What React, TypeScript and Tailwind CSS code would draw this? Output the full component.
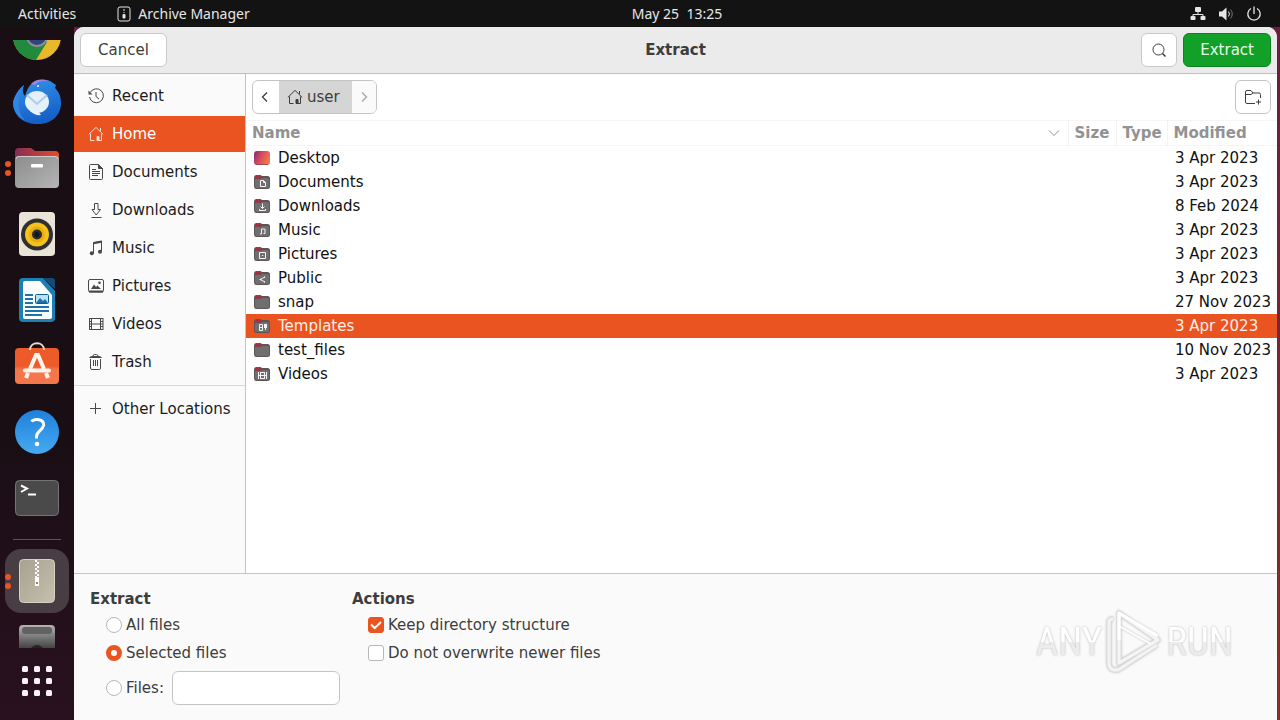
import { useState, type ReactNode } from "react";
import clsx from "clsx";

type Place = { label: string; icon: ReactNode };
type Entry = { name: string; modified: string; emblem?: ReactNode };

function Symbol({ children }: { children: ReactNode }) {
  return (
    <svg
      viewBox="0 0 16 16"
      className="h-4 w-4 shrink-0"
      fill="none"
      stroke="currentColor"
      aria-hidden="true"
    >
      {children}
    </svg>
  );
}

const homeIcon = (
  <Symbol>
    <path d="M.8 8.4 8 1.4l7.2 7" />
    <path d="M2.5 7.5v7h4M13.5 7.5v7h-3M12.5 2v3" />
    <path d="M9 14.5v-4h2v4z" fill="currentColor" />
  </Symbol>
);

const places: Place[] = [
  {
    label: "Recent",
    icon: (
      <Symbol>
        <path d="M2.2 4.5A7 7 0 1 1 1.5 9" />
        <path d="M8 4v4.5l3 2.5" />
        <path d="M.5 2.5v4h4z" fill="currentColor" stroke="none" />
      </Symbol>
    ),
  },
  { label: "Home", icon: homeIcon },
  {
    label: "Documents",
    icon: (
      <Symbol>
        <path d="M2.5.5h8l4 4v10q0 1-1 1h-11q-1 0-1-1v-13q0-1 1-1z" />
        <path d="M10.5.5v4h4z" fill="currentColor" />
        <path d="M4 5.5h4M4 7.5h8M4 9.5h8M4 11.5h6" />
      </Symbol>
    ),
  },
  {
    label: "Downloads",
    icon: (
      <Symbol>
        <path d="M6.5 1.5H10v6h2.5L8.2 13 4 7.5h2.5zM3.5 15.5h10" />
      </Symbol>
    ),
  },
  {
    label: "Music",
    icon: (
      <Symbol>
        <path d="M5.5 13V2.5l8-1.500v10" />
        <path d="M5.500 3.200 13.500 1.700" strokeWidth="2" />
        <circle cx="3.800" cy="13.200" r="2" fill="currentColor" stroke="none" />
        <circle cx="12" cy="11.800" r="2" fill="currentColor" stroke="none" />
      </Symbol>
    ),
  },
  {
    label: "Pictures",
    icon: (
      <Symbol>
        <rect x=".5" y="1.500" width="15" height="12.500" rx="1.500" />
        <path d="M1 13.500h14" strokeWidth="2" />
        <path d="m3 11 3-4.500 2 2.500 1.500-1.500L13 11z" fill="currentColor" stroke="none" />
        <circle cx="11.500" cy="4.800" r="1.300" fill="currentColor" stroke="none" />
      </Symbol>
    ),
  },
  {
    label: "Videos",
    icon: (
      <Symbol>
        <path d="M3.500 2v12M12.500 2v12M3.500 2.500h9M3.500 8h9M3.500 13.500h9" />
        <path d="M1.500 2v12M15 2v12M1.500 2.500h2M1.500 5.500h2M1.500 8h2M1.500 10.500h2M1.500 13.500h2M12.500 2.500h2.500M12.500 5.500h2.500M12.500 8h2.500M12.500 10.500h2.500M12.500 13.500h2.500" />
      </Symbol>
    ),
  },
  {
    label: "Trash",
    icon: (
      <Symbol>
        <path d="M5 2.500q0-2 1.500-2h2q1.500 0 1.500 2" />
        <path d="M1 4q1-2 3-2h7q2 0 3 2z" fill="currentColor" stroke="none" />
        <path d="M2.500 5v9q0 1.500 1.500 1.500h7.500q1 0 1-1.500V5M5.500 6v6M7.500 6v6M9.500 6v6" />
      </Symbol>
    ),
  },
];

const entries: Entry[] = [
  { name: "Desktop", modified: "3 Apr 2023" },
  {
    name: "Documents",
    modified: "3 Apr 2023",
    emblem: <path d="M6.500 6.500h3l2 2v4h-5zM9.500 6.500v2h2" />,
  },
  {
    name: "Downloads",
    modified: "8 Feb 2024",
    emblem: <path d="M8.500 5.500v5M6.500 8.500l2 2 2-2M5.500 11v1.500h6V11" />,
  },
  {
    name: "Music",
    modified: "3 Apr 2023",
    emblem: <path d="M7.500 12V7h3.500v4.500M6 12h1.500M9.500 11.500H11" />,
  },
  {
    name: "Pictures",
    modified: "3 Apr 2023",
    emblem: <path d="M5.500 6.500h6v6h-6zM8 9.500h1.200" />,
  },
  {
    name: "Public",
    modified: "3 Apr 2023",
    emblem: <path d="M11 7 6 9.500l5 2.500M5.500 9.500h2M10.500 6.500v1.500M10.500 11v1.500" />,
  },
  { name: "snap", modified: "27 Nov 2023" },
  {
    name: "Templates",
    modified: "3 Apr 2023",
    emblem: <path d="M5.500 6.500h3v6h-3zM6 9.500h2M10.500 6v4M12.500 6v4M11.500 6v6" />,
  },
  { name: "test_files", modified: "10 Nov 2023" },
  {
    name: "Videos",
    modified: "3 Apr 2023",
    emblem: <path d="M4.500 6v7M12.500 6v7M6.500 6v7M10.500 6v7M6.500 6.500h4M4.500 9.500h8M6.500 12.500h4" />,
  },
];

function FolderIcon({ entry }: { entry: Entry }) {
  if (entry.name === "Desktop") {
    return (
      <svg viewBox="0 0 16 16" className="h-4 w-4 shrink-0" aria-hidden="true">
        <defs>
          <linearGradient id="desktop" x1="0" y1="0" x2="1" y2=".4">
            <stop offset="0" stopColor="#7d2c78" />
            <stop offset=".5" stopColor="#d84a5c" />
            <stop offset="1" stopColor="#f0764c" />
          </linearGradient>
        </defs>
        <rect y="1" width="16" height="14" rx="3" fill="url(#desktop)" />
        <path d="M2 14.500h12" stroke="#9c4a55" />
      </svg>
    );
  }

  return (
    <svg viewBox="0 0 16 16" className="h-4 w-4 shrink-0" fill="none" aria-hidden="true">
      <path
        d="M0 3.500Q0 1 2.500 1h4L8 2h5.500Q16 2 16 4.500v8q0 2.500-2.500 2.500h-11Q0 15 0 12.500z"
        fill="#5f5558"
      />
      <path d="M1.500 4.500Q1.500 2 3 2h3.200L8 3h5.500q1.500 0 1.500 1.500z" fill="#b5283f" />
      <path
        d="M1 6Q1 5 2 5h4.500L8 4h5.500Q15 4 15 5.500v7q0 1.500-1.500 1.500h-11Q1 14 1 12.500z"
        fill="#6f6f6f"
      />
      <g stroke="#f4f4f4">{entry.emblem}</g>
    </svg>
  );
}

function DockIcon({ children }: { children: ReactNode }) {
  return (
    <svg viewBox="0 0 48 48" className="h-12 w-12" fill="none" aria-hidden="true">
      {children}
    </svg>
  );
}

function RunningDots() {
  return (
    <span className="absolute left-0 flex flex-col gap-[3px]">
      <span className="h-1.5 w-1.5 rounded-full bg-[#e95420]" />
      <span className="h-1.5 w-1.5 rounded-full bg-[#e95420]" />
    </span>
  );
}

type DockItemProps = {
  label: string;
  running?: boolean;
  active?: boolean;
  children: ReactNode;
};

function DockItem({ label, running, active, children }: DockItemProps) {
  return (
    <button
      aria-label={label}
      className={clsx(
        "relative flex h-16 w-16 shrink-0 items-center justify-center rounded-2xl",
        active && "bg-[#483d43]",
      )}
    >
      {running && <RunningDots />}
      <DockIcon>{children}</DockIcon>
    </button>
  );
}

function Dock() {
  return (
    <nav
      aria-label="Dock"
      className="flex w-[74px] shrink-0 flex-col items-center bg-linear-to-b from-[#1a0e15] from-60% to-[#29111f] pt-[13px]"
    >
      <div className="flex min-h-0 flex-1 flex-col items-center gap-0.5 overflow-hidden">
        <div className="-mt-9">
          <DockItem label="Google Chrome">
            <circle cx="24" cy="24" r="24" fill="#e9b92c" />
            <path d="M24 24 3.200 12A24 24 0 0 0 23 48l11-18z" fill="#218a3c" />
            <path d="M24 24h20.800L34 12H3.200z" fill="#d93a2b" />
            <circle cx="24" cy="24" r="11" fill="#8c8c9c" />
            <circle cx="24" cy="24" r="9" fill="#34437c" />
          </DockItem>
        </div>
        <DockItem label="Thunderbird">
          <defs>
            <linearGradient id="bird" x1="0" y1="0" x2=".3" y2="1">
              <stop offset="0" stopColor="#3494ec" />
              <stop offset="1" stopColor="#1560c8" />
            </linearGradient>
          </defs>
          <path
            d="M0 24Q3 13 11 7q-3 7 1 11C15 8 19 3 27 2q8-1 13 3l3 2-1 3c5 5 6 10 6 15 0 13-10 21-23 21C10 46 0 38 0 24z"
            fill="url(#bird)"
          />
          <path d="M18 6q7-7 18-3-10-1-14 4z" fill="#a880e0" />
          <path d="M0 24q0 12 12 19-8-9-6-22 1-6 5-14Q3 13 0 24z" fill="#3184e2" />
          <ellipse cx="24" cy="24" rx="12" ry="11" fill="#e4f0fa" />
          <path d="m14 17 10 9 10-9" stroke="#b3cbe0" strokeWidth="2" />
          <path d="M17 33q5 5 11 4l-3-4z" fill="#e4f0fa" />
          <circle cx="25" cy="8" r="1" fill="#fff" />
        </DockItem>
        <DockItem label="Files" running>
          <defs>
            <linearGradient id="files-back">
              <stop offset="0" stopColor="#842e55" />
              <stop offset="1" stopColor="#e64c28" />
            </linearGradient>
            <linearGradient id="files-front" x1="0" y1="0" x2="1" y2="1">
              <stop offset="0" stopColor="#8c8c8c" />
              <stop offset="1" stopColor="#b5b5b5" />
            </linearGradient>
          </defs>
          <path d="M2 8q0-4 4-4h12l4 3h20q4 0 4 4v14H2z" fill="url(#files-back)" />
          <rect x="2" y="12" width="44" height="32" rx="4" fill="url(#files-front)" />
          <path d="M3 15q0-2.500 3-2.500h36q3 0 3 2.500" stroke="#cfcfcf" />
          <rect x="18" y="20" width="12" height="3.500" rx="1" fill="#fff" />
        </DockItem>
        <DockItem label="Rhythmbox">
          <rect x="6" y="2" width="36" height="44" rx="4" fill="#e9e3d8" />
          <circle cx="24" cy="24.500" r="16" fill="#303030" />
          <circle cx="24" cy="24.500" r="12" fill="#f6c21c" />
          <circle cx="24" cy="24.500" r="8" fill="#e8ae10" />
          <circle cx="24" cy="24.500" r="5" fill="#2b2b2b" />
          <circle cx="24" cy="24.500" r="2.500" fill="#11171e" />
        </DockItem>
        <DockItem label="LibreOffice Writer">
          <path d="M10 2h20l12 13v27q0 4-4 4H10q-4 0-4-4V6q0-4 4-4z" fill="#1c80b4" />
          <path d="M12 5h15l12 14v22q0 2-2 2H12q-2 0-2-2V7q0-2 2-2z" fill="#fafcfd" />
          <path d="M30 2h9q3 0 3 3v8z" fill="#164b78" />
          <path
            d="M12 19h8M12 23h8M12 27h8M12 31h24M12 35h24M12 39h17"
            stroke="#1a74aa"
            strokeWidth="2"
          />
          <rect x="22.500" y="18.500" width="13" height="9" rx="1" fill="#b8e4fa" stroke="#155b90" />
          <path d="m23 27 4-5 3 3 2-2 3 4z" fill="#1a74aa" />
        </DockItem>
        <DockItem label="Ubuntu Software">
          <defs>
            <linearGradient id="bag" x1="0" y1="0" x2="0" y2="1">
              <stop offset=".5" stopColor="#ee5b2a" />
              <stop offset=".6" stopColor="#f4764b" />
            </linearGradient>
          </defs>
          <rect x="2" y="6" width="44" height="36" rx="4" fill="url(#bag)" />
          <path d="M17 8c0-9 14-9 14 0" stroke="#f2d8c6" strokeWidth="2" />
          <g stroke="#fff5ee" strokeWidth="4">
            <path d="m17 27 6-14h2l6 14M15 31l-2 5M33 31l2 5" />
            <path d="M12 28.500h24" strokeLinecap="round" />
          </g>
        </DockItem>
        <DockItem label="Help">
          <defs>
            <linearGradient id="help" x1="0" y1="0" x2="0" y2="1">
              <stop offset="0" stopColor="#1f80dc" />
              <stop offset="1" stopColor="#46aaf0" />
            </linearGradient>
          </defs>
          <circle cx="24" cy="24" r="22" fill="url(#help)" />
          <path
            d="M18.500 13.500c3-3.500 13-2.500 12 4-1 5-7 5.500-7 11v2"
            stroke="#fff"
            strokeWidth="3"
          />
          <circle cx="24" cy="36" r="2.300" fill="#fff" />
        </DockItem>
        <DockItem label="Terminal">
          <rect x="2.500" y="6.500" width="43" height="35" rx="4" fill="#4a4a4a" stroke="#747474" />
          <path d="m8 11.500 6 3L8 18M15 20.500h8" stroke="#fff" strokeWidth="2" />
        </DockItem>
        <hr className="my-[7px] w-12 shrink-0 border-[#5d5359]" />
        <DockItem label="Archive Manager" running active>
          <defs>
            <linearGradient id="archive" x1="0" y1="0" x2="1" y2="1">
              <stop offset="0" stopColor="#a7a191" />
              <stop offset="1" stopColor="#c6bfae" />
            </linearGradient>
          </defs>
          <rect x="6.500" y="2.500" width="35" height="43" rx="4" fill="url(#archive)" stroke="#d5d0c2" />
          <path d="M23 3v18M25 5v18" stroke="#fff" strokeWidth="2" strokeDasharray="2 2" />
          <path d="M22 20h4v9h-4z" fill="#fff" />
          <path d="M23 25h2v2h-2z" fill="#8d8779" />
        </DockItem>
        <DockItem label="Removable drive">
          <defs>
            <linearGradient id="drive" x1="0" y1="0" x2="0" y2="1">
              <stop offset="0" stopColor="#b4b4b4" />
              <stop offset=".6" stopColor="#333" />
            </linearGradient>
          </defs>
          <rect x="6" y="2" width="36" height="44" rx="4" fill="url(#drive)" />
          <rect x="9" y="4" width="30" height="7" rx="3" fill="#626262" />
          <circle cx="24" cy="29" r="7" fill="#252525" />
        </DockItem>
      </div>
      <button
        aria-label="Show Applications"
        className="flex h-[72px] w-16 shrink-0 justify-center pt-[9px]"
      >
        <DockIcon>
          <g fill="#fbf3f8">
            {[9, 21, 33].map((y) =>
              [9, 21, 33].map((x) => (
                <rect key={`${x}-${y}`} x={x} y={y} width="6" height="6" rx="1.500" />
              )),
            )}
          </g>
        </DockIcon>
      </button>
    </nav>
  );
}

function TopBar() {
  return (
    <header className="grid h-[27px] shrink-0 grid-cols-[74px_1fr_auto_1fr] items-center bg-[#131313] font-['Noto_Sans','Open_Sans',sans-serif] text-sm text-[#e6e6e6]">
      <div className="col-span-2 flex items-center pl-[18px]">
        <button>Activities</button>
        <button className="ml-10 flex items-center gap-1.5">
          <Symbol>
            <rect x="2" y="1" width="12" height="14" rx="2" />
            <path d="M8 3v2M8 6v1" />
            <rect x="6.500" y="8" width="3" height="4.500" rx="1" fill="currentColor" stroke="none" />
          </Symbol>
          Archive Manager
        </button>
      </div>
      <button className="whitespace-pre">May 25  13:25</button>
      <div className="flex items-center justify-end gap-3 pr-[18px]">
        <Symbol>
          <g fill="currentColor" stroke="none">
            <rect x="5" y="1" width="6" height="5" rx="1" />
            <rect x=".5" y="10" width="5" height="4" rx="1" />
            <rect x="10.500" y="10" width="5" height="4" rx="1" />
          </g>
          <path d="M8 6v2.500M3 10V8.500h10V10" />
        </Symbol>
        <Symbol>
          <path d="M1 5.500h3L8.500 1.500v13L4 10.500H1z" fill="currentColor" stroke="none" />
          <path d="M10.500 5.500q2 2.500 0 5" />
          <path d="M12.500 3.500q3.500 4.500 0 9" stroke="#777" />
        </Symbol>
        <Symbol>
          <path d="M5 2.500a6.200 6.200 0 1 0 6 0M8 .5V8" strokeWidth="1.300" />
        </Symbol>
      </div>
    </header>
  );
}

function Sidebar() {
  const [selected, setSelected] = useState("Home");

  return (
    <aside className="w-[172px] shrink-0 border-r border-[#c4c4c4] bg-[#fafafa] pt-1">
      <ul className="flex flex-col gap-0.5">
        {places.map((place) => (
          <li key={place.label}>
            <button
              onClick={() => setSelected(place.label)}
              className={clsx(
                "flex h-9 w-full items-center gap-2 px-3.5",
                place.label === selected ? "bg-[#e95420] text-white" : "text-[#1c1c1c]",
              )}
            >
              <span className="opacity-80">{place.icon}</span>
              {place.label}
            </button>
          </li>
        ))}
      </ul>
      <hr className="my-[5px] border-[#d9d9d9]" />
      <button className="flex h-9 w-full items-center gap-2 px-3.5 whitespace-nowrap text-[#1c1c1c]">
        <span className="opacity-80">
          <Symbol>
            <path d="M7.500 2v11M2 7.500h11" />
          </Symbol>
        </span>
        Other Locations
      </button>
    </aside>
  );
}

function PathBar() {
  return (
    <div className="flex h-[46px] items-center justify-between px-1.5">
      <div className="flex h-[34px] overflow-hidden rounded-md border border-[#c4c4c4]">
        <button aria-label="Back" className="w-[26px] px-1 text-[#3d3d3d]">
          <Symbol>
            <path d="m10 3.500-4.500 4.500L10 12.500" strokeWidth="1.300" />
          </Symbol>
        </button>
        <button className="flex items-center gap-1 bg-[#d5d5d5] px-2 pr-3 text-[#3d3d3d]">
          {homeIcon}
          user
        </button>
        <button aria-label="Forward" className="w-6 bg-[#fafafa] px-1 text-[#a5a5a5]">
          <Symbol>
            <path d="m6 3.500 4.500 4.500L6 12.500" strokeWidth="1.300" />
          </Symbol>
        </button>
      </div>
      <button
        aria-label="Create Folder"
        className="flex h-[34px] w-9 items-center justify-center rounded-md border border-[#c4c4c4] text-[#3d3d3d]"
      >
        <Symbol>
          <path d="M10 14.500H2q-1.500 0-1.500-1.500V3Q.5 1.500 2 1.500h4L8 4h6q1.500 0 1.500 1.500V9" />
          <path d="M.5 5.500H6L8 4M13.500 10.500v5M11 13h5" />
        </Symbol>
      </button>
    </div>
  );
}

function FileTable() {
  const [selected, setSelected] = useState("Templates");

  return (
    <table className="w-full table-fixed text-left">
      <colgroup>
        <col />
        <col className="w-12" />
        <col className="w-[51px]" />
        <col className="w-[110px]" />
      </colgroup>
      <thead className="border-y border-[#f5f5f5] text-[#929292]">
        <tr className="h-[25px]">
          <th className="border-r border-[#f3f3f3] px-1.5">
            <div className="flex items-center justify-between">
              Name
              <Symbol>
                <path d="m3 5.500 5 5 5-5" />
              </Symbol>
            </div>
          </th>
          <th className="border-r border-[#f3f3f3] px-1.5">Size</th>
          <th className="border-r border-[#f3f3f3] px-1.5">Type</th>
          <th className="px-1.5">Modified</th>
        </tr>
      </thead>
      <tbody>
        {entries.map((entry) => (
          <tr
            key={entry.name}
            onClick={() => setSelected(entry.name)}
            className={clsx(
              "h-6",
              entry.name === selected ? "bg-[#e95420] text-[#fdeee8]" : "text-[#111]",
            )}
          >
            <td className="pl-2">
              <div className="flex items-center gap-2">
                <FolderIcon entry={entry} />
                {entry.name}
              </div>
            </td>
            <td />
            <td />
            <td className="pl-2 whitespace-nowrap">{entry.modified}</td>
          </tr>
        ))}
      </tbody>
    </table>
  );
}

const radioStyle =
  "h-4 w-4 appearance-none rounded-full border border-[#b8b8b8] bg-white checked:border-[5px] checked:border-[#e95420]";

function Options() {
  const [scope, setScope] = useState("selected");
  const [keep, setKeep] = useState(true);
  const [newer, setNewer] = useState(false);

  return (
    <footer className="relative flex shrink-0 gap-3 border-t border-[#c4c4c4] bg-[#fafafa] px-4 py-[15px] text-[#3d3d3d]">
      <fieldset>
        <legend className="font-bold">Extract</legend>
        <div className="flex flex-col gap-2 pt-1.5 pl-4">
          <label className="flex h-5 items-center gap-1">
            <input
              type="radio"
              name="scope"
              className={radioStyle}
              checked={scope === "all"}
              onChange={() => setScope("all")}
            />
            All files
          </label>
          <label className="flex h-5 items-center gap-1">
            <input
              type="radio"
              name="scope"
              className={radioStyle}
              checked={scope === "selected"}
              onChange={() => setScope("selected")}
            />
            Selected files
          </label>
          <div className="flex h-[34px] items-center gap-2">
            <label className="flex items-center gap-1">
              <input
                type="radio"
                name="scope"
                className={radioStyle}
                checked={scope === "pattern"}
                onChange={() => setScope("pattern")}
              />
              Files:
            </label>
            <input
              type="text"
              aria-label="Files"
              className="h-full w-[168px] rounded-md border border-[#c4c4c4] bg-white px-2"
            />
          </div>
        </div>
      </fieldset>
      <fieldset>
        <legend className="font-bold">Actions</legend>
        <div className="flex flex-col gap-2 pt-1.5 pl-4">
          <Check label="Keep directory structure" checked={keep} onChange={setKeep} />
          <Check label="Do not overwrite newer files" checked={newer} onChange={setNewer} />
        </div>
      </fieldset>
      <Watermark />
    </footer>
  );
}

type CheckProps = {
  label: string;
  checked: boolean;
  onChange: (checked: boolean) => void;
};

function Check({ label, checked, onChange }: CheckProps) {
  return (
    <label className="flex h-5 items-center gap-1">
      <span className="grid h-4 w-4 place-items-center">
        <input
          type="checkbox"
          checked={checked}
          onChange={(event) => onChange(event.target.checked)}
          className="col-start-1 row-start-1 h-4 w-4 appearance-none rounded-[3px] border border-[#b8b8b8] bg-white checked:border-[#e95420] checked:bg-[#e95420]"
        />
        {checked && (
          <svg
            viewBox="0 0 16 16"
            className="pointer-events-none col-start-1 row-start-1 h-4 w-4"
            fill="none"
            aria-hidden="true"
          >
            <path d="m3 7.500 3.700 3.500L13 5" stroke="#fff" strokeWidth="2" />
          </svg>
        )}
      </span>
      {label}
    </label>
  );
}

const watermarkText =
  "bg-linear-to-b from-white from-50% to-[#ececec] to-50% bg-clip-text text-transparent drop-shadow-[0_0_1px_#b8b8b8]";

function Watermark() {
  return (
    <div className="pointer-events-none absolute top-9 right-11 flex items-center gap-1 font-['Roboto_Condensed','Roboto',sans-serif] text-[39px] leading-none">
      <span className={watermarkText}>ANY</span>
      <svg
        viewBox="0 0 56 64"
        className="h-16 w-14 drop-shadow-[0_0_1px_#bbb]"
        fill="none"
        strokeLinejoin="round"
        aria-hidden="true"
      >
        <path d="M7 9q-4 0-4 3v41q0 8 9 7l39-25" stroke="#ddd" strokeWidth="5" />
        <path d="M7 9q-4 0-4 3v41q0 8 9 7l39-25" stroke="#f3f3f3" strokeWidth="3" />
        <path d="M13 3v50l39-23z" stroke="#ddd" strokeWidth="5" />
        <path d="M13 3v50l39-23z" stroke="#f5f5f5" strokeWidth="3" />
        <path d="M13 30V3l39 23" stroke="#fff" strokeWidth="3" />
        <path d="m13 16 32 18" stroke="#fff" strokeWidth="2" />
      </svg>
      <span className={watermarkText}>RUN</span>
    </div>
  );
}

export default function App() {
  return (
    <div className="flex h-screen flex-col overflow-hidden font-['DejaVu_Sans',sans-serif] text-[15px] leading-5">
      <TopBar />
      <div className="flex min-h-0 flex-1 bg-[#1a0e15]">
        <Dock />
        <div className="min-w-0 flex-1 bg-linear-to-b from-[#6b1c40] to-[#86301c] pr-[3px]">
          <main className="flex h-full flex-col overflow-hidden rounded-t-[10px] bg-white">
            <div className="grid h-[47px] shrink-0 grid-cols-[1fr_auto_1fr] items-center border-b border-[#bfbfbf] bg-[#ebebeb] px-1.5 text-[#3d3d3d]">
              <div className="flex">
                <button className="h-[34px] rounded-md border border-[#c9c9c9] bg-white px-[17px]">
                  Cancel
                </button>
              </div>
              <h1 className="font-bold">Extract</h1>
              <div className="flex justify-end gap-1.5">
                <button
                  aria-label="Search"
                  className="flex h-[34px] w-9 items-center justify-center rounded-md border border-[#c9c9c9] bg-white"
                >
                  <Symbol>
                    <circle cx="7.500" cy="7.500" r="5.500" />
                    <path d="m11.500 11.500 3 3" strokeWidth="1.500" />
                  </Symbol>
                </button>
                <button className="h-[34px] rounded-md border border-[#0d8420] bg-[#12a128] px-4 text-[#eafbea]">
                  Extract
                </button>
              </div>
            </div>
            <div className="flex min-h-0 flex-1">
              <Sidebar />
              <section className="min-w-0 flex-1">
                <PathBar />
                <FileTable />
              </section>
            </div>
            <Options />
          </main>
        </div>
      </div>
    </div>
  );
}
